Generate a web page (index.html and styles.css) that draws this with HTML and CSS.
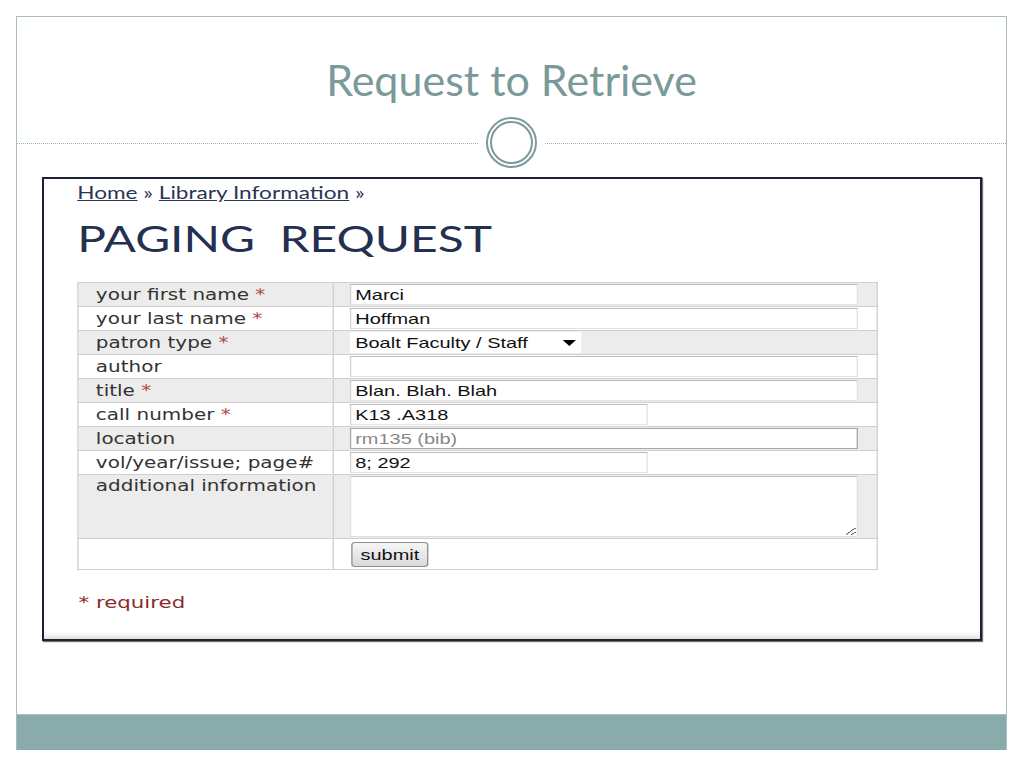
FILE: index.html
```html
<!DOCTYPE html>
<html lang="en">
<head>
    <meta charset="UTF-8">
    <title>Request to Retrieve</title>
    <link rel="stylesheet" href="styles.css">
</head>
<body>
    <div class="slide">
        <!-- Slide title -->
        <div class="title-area">
            <h1 class="slide-title">Request to Retrieve</h1>
        </div>
        <div class="divider">
            <span class="dots"></span>
            <span class="ring"><span class="ring-inner"></span></span>
            <span class="dots"></span>
        </div>

        <!-- Screenshot of the web form (the pasted picture is stretched sideways) -->
        <div class="shot">
            <div class="shot-inner">
                <div class="crumbs"><a href="#">Home</a> » <a href="#">Library Information</a> »</div>
                <h2 class="page-title">PAGING&nbsp; REQUEST</h2>

                <table class="form-table">
                    <tr class="odd">
                        <td class="label">your first name <span class="req">*</span></td>
                        <td class="field"><input class="text wide" type="text" value="Marci"></td>
                    </tr>
                    <tr>
                        <td class="label">your last name <span class="req">*</span></td>
                        <td class="field"><input class="text wide" type="text" value="Hoffman"></td>
                    </tr>
                    <tr class="odd">
                        <td class="label">patron type <span class="req">*</span></td>
                        <td class="field"><div class="select">Boalt Faculty / Staff<span class="arrow"></span></div></td>
                    </tr>
                    <tr>
                        <td class="label">author</td>
                        <td class="field"><input class="text wide" type="text" value=""></td>
                    </tr>
                    <tr class="odd">
                        <td class="label">title <span class="req">*</span></td>
                        <td class="field"><input class="text wide" type="text" value="Blan. Blah. Blah"></td>
                    </tr>
                    <tr>
                        <td class="label">call number <span class="req">*</span></td>
                        <td class="field"><input class="text short" type="text" value="K13 .A318"></td>
                    </tr>
                    <tr class="odd">
                        <td class="label">location</td>
                        <td class="field"><input class="text wide framed" type="text" placeholder="rm135 (bib)"></td>
                    </tr>
                    <tr>
                        <td class="label">vol/year/issue; page#</td>
                        <td class="field"><input class="text short" type="text" value="8; 292"></td>
                    </tr>
                    <tr class="odd tall">
                        <td class="label">additional information</td>
                        <td class="field"><textarea class="notes"></textarea></td>
                    </tr>
                    <tr class="last">
                        <td class="label"></td>
                        <td class="field"><button class="submit" type="button">submit</button></td>
                    </tr>
                </table>

                <p class="required-note">* required</p>
            </div>
        </div>

        <div class="footer-band"></div>
    </div>
</body>
</html>
```

FILE: styles.css
```css
body {
    margin: 0;
    background-color: #fff;
    font-family: "Liberation Sans", Arial, sans-serif;
}
.slide {
    margin: 16px 0 0 16px;
    width: 989px;
    height: 733px;
    border: 1px solid #a9bdbd;
    border-bottom: none;
    display: flex;
    flex-direction: column;
}
.title-area {
    height: 99px;
    display: flex;
    justify-content: center;
    align-items: flex-start;
}
.slide-title {
    margin: 38px 0 0 0;
    font-family: Lato, "Open Sans", sans-serif;
    font-weight: 400;
    font-size: 43px;
    line-height: 50px;
    color: #7a9999;
}
.divider {
    height: 52px;
    display: flex;
    align-items: center;
}
.dots {
    flex: 1;
    border-top: 1px dotted #9ab2b2;
    margin-top: 2px;
}
.ring {
    width: 47px;
    height: 47px;
    margin: 0 8px;
    border: 2px solid #7d9999;
    border-radius: 50%;
    display: flex;
    justify-content: center;
    align-items: center;
}
.ring-inner {
    width: 39px;
    height: 39px;
    border: 2px solid #7d9999;
    border-radius: 50%;
}
.shot {
    margin: 9px 0 0 25px;
    width: 940px;
    height: 464px;
    border: 2px solid #1c2236;
    box-shadow: 1px 1px 1px rgba(0, 0, 0, 0.55), inset 0 -6px 6px -4px #d6d6d6;
    box-sizing: border-box;
    overflow: hidden;
}
/* content is laid out narrow and stretched like the pasted screenshot */
.shot-inner {
    width: 706px;
    padding-left: 25px;
    box-sizing: border-box;
    transform: scaleX(1.33);
    transform-origin: 0 0;
}
.crumbs {
    padding-top: 3px;
    font-family: Lato, "Open Sans", sans-serif;
    font-size: 17px;
    color: #2b3552;
}
.crumbs a {
    color: #2b3552;
}
.page-title {
    margin: 13px 0 0 0;
    font-family: Lato, "Open Sans", sans-serif;
    font-weight: 400;
    font-size: 36px;
    line-height: 44px;
    color: #24304f;
}
.form-table {
    margin-top: 22px;
    width: 602px;
    border-collapse: collapse;
    border: 1px solid #cfcfcf;
}
.form-table td {
    border-top: 1px solid #cfcfcf;
    padding: 0;
    height: 23px;
    vertical-align: middle;
}
.form-table tr.odd td {
    background-color: #ececec;
}
.label {
    width: 192px;
    border-right: 1px solid #cfcfcf;
    padding-left: 13px !important;
    box-sizing: border-box;
    font-family: "DejaVu Sans", Verdana, sans-serif;
    font-size: 15px;
    color: #333;
}
.tall .label {
    vertical-align: top;
    padding-top: 2px !important;
}
.req {
    color: #b04a4a;
}
.field {
    padding-left: 12px !important;
}
.text {
    display: block;
    height: 21px;
    box-sizing: border-box;
    margin: 1px 0;
    padding: 0 3px;
    border: 1px solid #e2e2e2;
    border-top-color: #b9b9b9;
    border-left-color: #d0d0d0;
    background-color: #fff;
    font-family: "Liberation Sans", Arial, sans-serif;
    font-size: 15px;
    color: #111;
}
.wide {
    width: 382px;
}
.short {
    width: 224px;
}
.framed {
    border: 1px solid #a8a8a8;
}
.framed::placeholder {
    color: #888;
}
.select {
    width: 174px;
    height: 21px;
    box-sizing: border-box;
    margin: 1px 0;
    padding: 0 0 0 4px;
    background-color: #fff;
    font-size: 15px;
    line-height: 21px;
    color: #111;
    display: flex;
    align-items: center;
    justify-content: space-between;
}
.arrow {
    width: 0;
    height: 0;
    margin-right: 4px;
    border-left: 5px solid transparent;
    border-right: 5px solid transparent;
    border-top: 6px solid #000;
}
.notes {
    display: block;
    width: 382px;
    height: 61px;
    box-sizing: border-box;
    margin: 1px 0;
    border: 1px solid #e0e0e0;
    border-top-color: #c4c4c4;
    background-color: #fff;
    resize: both;
}
.tall td {
    height: 62px;
}
.last td {
    height: 30px;
}
.submit {
    margin-left: 1px;
    height: 25px;
    padding: 0 6px;
    border: 1px solid #8e8e8e;
    border-radius: 3px;
    background: linear-gradient(#f6f6f6, #d9d9d9);
    font-family: "Liberation Sans", Arial, sans-serif;
    font-size: 15px;
    color: #111;
}
.required-note {
    margin: 23px 0 0 1px;
    font-family: "DejaVu Sans", Verdana, sans-serif;
    font-size: 16px;
    color: #8a2c2c;
}
.footer-band {
    margin-top: auto;
    height: 35px;
    background-color: #8aabab;
    border-top: 1px solid #a9c0c0;
}
```
